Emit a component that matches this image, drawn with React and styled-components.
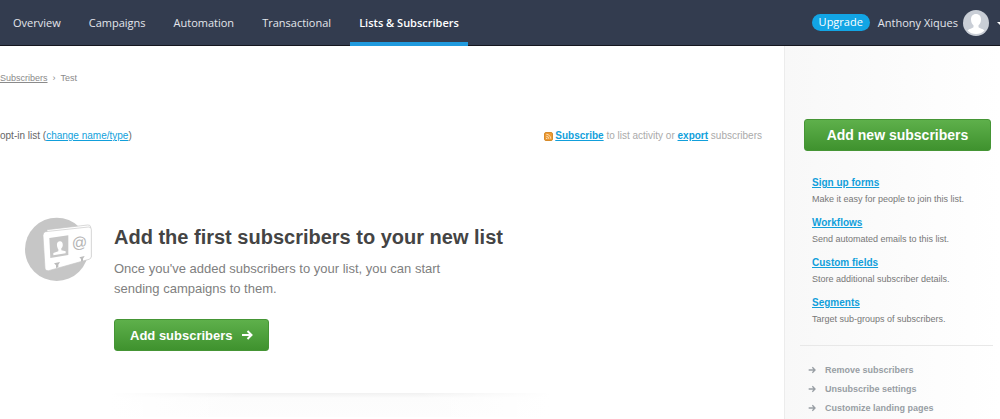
import React from 'react';
import styled, { createGlobalStyle } from 'styled-components';

const GlobalStyle = createGlobalStyle`
  * { box-sizing: border-box; }
  html, body { height: 100%; }
  #root { height: 100%; }
  body {
    margin: 0;
    background: #fff;
    color: #666;
    font-family: "Liberation Sans", Arial, sans-serif;
    overflow: hidden;
  }
`;

const Page = styled.div`
  display: flex;
  flex-direction: column;
  min-height: 100%;
`;

const TopBar = styled.header`
  display: flex;
  justify-content: space-between;
  height: 46px;
  padding-left: 4px;
  background: #333c4f;
  box-shadow: inset 0 -1px 0 #15161f;
  font-family: "Open Sans", sans-serif;
  font-size: 11px;
`;

const Nav = styled.nav`
  display: flex;
  gap: 10px;
`;

const NavLink = styled.a`
  display: flex;
  align-items: center;
  padding: 2px 9px 0;
  border-bottom: 4px solid ${props => (props.$active ? '#1f9ade' : 'transparent')};
  color: ${props => (props.$active ? '#fff' : '#e3e6ec')};
  font-weight: ${props => (props.$active ? 600 : 400)};
  text-decoration: none;
  white-space: nowrap;
`;

const Account = styled.div`
  display: flex;
  align-items: center;
  flex-shrink: 0;
  padding-bottom: 1px;
  overflow: hidden;
`;

const Upgrade = styled.a`
  height: 17px;
  margin-right: 8px;
  padding: 0 7px;
  border-radius: 9px;
  background: #12a5e5;
  color: #fff;
  line-height: 16px;
  text-decoration: none;
`;

const UserButton = styled.button`
  display: flex;
  align-items: center;
  gap: 5px;
  margin-right: -5px;
  padding: 0;
  border: 0;
  background: none;
  color: #e3e6ec;
  font: inherit;
`;

const Caret = styled.span`
  margin: 3px 0 0 3px;
  border: 4px solid transparent;
  border-top-color: #fff;
  border-bottom: 0;
`;

const Columns = styled.div`
  display: flex;
  flex: 1;
`;

const Main = styled.main`
  flex: 1;
  min-width: 0;
  padding: 25px 22px 0 0;
`;

const Breadcrumb = styled.nav`
  display: flex;
  gap: 5px;
  color: #8a8a8a;
  font-size: 9px;
  line-height: 14px;

  a { color: inherit; }
`;

const ListBar = styled.div`
  display: flex;
  justify-content: space-between;
  margin-top: 43px;
  font-size: 10px;
  line-height: 16px;

  a { color: #119fdb; }
`;

const Activity = styled.div`
  display: flex;
  align-items: center;
  gap: 2px;
  color: #aaa;

  a { font-weight: 700; }
`;

const Intro = styled.section`
  display: flex;
  gap: 22px;
  padding: 73px 0 0 25px;
`;

const IntroTitle = styled.h1`
  margin: 8px 0 10px;
  color: #444;
  font-size: 20px;
  line-height: 24px;
`;

const IntroText = styled.p`
  max-width: 340px;
  margin: 0 0 20px;
  color: #808080;
  font-size: 13px;
  line-height: 20px;
`;

const GreenButton = styled.button`
  display: flex;
  align-items: center;
  justify-content: center;
  gap: 8px;
  width: ${props => (props.$wide ? '100%' : 'auto')};
  height: 32px;
  padding: 0 15px;
  border: 1px solid #459535;
  border-radius: 3px;
  background: linear-gradient(#5eb04b, #3f922e);
  color: #fff;
  font-family: inherit;
  font-size: ${props => (props.$wide ? '14px' : '13px')};
  font-weight: 700;
`;

const Shade = styled.div`
  max-width: 440px;
  height: 24px;
  margin: 42px 0 0 110px;
  background:
    linear-gradient(90deg, #fff, transparent 30%, transparent 70%, #fff),
    linear-gradient(#f1f1f1, #fcfcfc 5px, #fdfdfd);
`;

const Sidebar = styled.aside`
  flex: 0 0 216px;
  padding: 73px 9px 0 19px;
  border-left: 1px solid #ececec;
  background: linear-gradient(90deg, #f8f8f8, #fff);
`;

const LinkList = styled.dl`
  margin: 24px 0 0;
  padding: 0 0 18px 8px;
  line-height: 16px;

  dt { font-size: 10px; font-weight: 700; }
  dt a { color: #119fdb; }
  dd { margin: 0 0 8px; color: #777; font-size: 9px; white-space: nowrap; }
  dd:last-child { margin: 0; }
`;

const Actions = styled.ul`
  margin: 0 -2px 0 -4px;
  padding: 14px 0 0 8px;
  border-top: 1px solid #e8e8e8;
  list-style: none;
`;

const ActionLink = styled.a`
  display: flex;
  align-items: center;
  gap: 9px;
  height: 19px;
  color: #989ea4;
  font-size: 9px;
  font-weight: 700;
  text-decoration: none;
`;

const resources = [
  { name: 'Sign up forms', text: 'Make it easy for people to join this list.' },
  { name: 'Workflows', text: 'Send automated emails to this list.' },
  { name: 'Custom fields', text: 'Store additional subscriber details.' },
  { name: 'Segments', text: 'Target sub-groups of subscribers.' },
];

const actions = ['Remove subscribers', 'Unsubscribe settings', 'Customize landing pages'];

const Arrow = ({ size, weight }) => (
  <svg width={size} height={size} viewBox="0 0 12 12" fill="none" stroke="currentColor" strokeWidth={weight} aria-hidden="true">
    <path d="M1 6h9M6.500 2l4 4-4 4" />
  </svg>
);

const Avatar = () => (
  <svg width="26" height="26" viewBox="0 0 26 26" aria-hidden="true">
    <circle cx="13" cy="13" r="13" fill="#c9ced6" />
    <path d="M13 4c-3.300 0-5 2.300-5 5.500 0 2.600 1 4.500 2.500 5.800v2c-1.500 1.200-4 1.400-6 3.200a12 12 0 0 0 17 0c-2-1.800-4.500-2-6-3.200v-2C17 14 18 12.100 18 9.500 18 6.300 16.300 4 13 4z" fill="#fff" />
  </svg>
);

const RssIcon = () => (
  <svg width="9" height="9" viewBox="0 0 9 9" fill="none" aria-hidden="true">
    <rect x=".5" y=".5" width="8" height="8" rx="1.500" fill="#ee9a33" stroke="#d68b2c" />
    <path d="M2.300 4.300a2.500 2.500 0 0 1 2.500 2.500M2.300 2.300a4.500 4.500 0 0 1 4.500 4.500" stroke="#fbe3c0" strokeWidth=".9" />
    <circle cx="2.700" cy="6.400" r=".7" fill="#fbe3c0" />
  </svg>
);

// contact card in front of a grey disc
const ContactCard = () => (
  <svg width="67" height="65" viewBox="74 52 201 195" aria-hidden="true">
    <circle cx="169" cy="149" r="95" fill="#c6c6c6" />
    <path d="M140 90l122-14q8-1 9 6l1 90-132 30z" fill="#fff" stroke="#c6c6c6" strokeWidth="2" />
    <path d="M136 96l128-14q9-1 9 8v80q0 7-7 9l-121 34q-10 2-11-7l-6-98q0-11 8-12z" fill="#fff" stroke="#c6c6c6" strokeWidth="2" />
    <path d="M161 191l18-4-5 8v8l-7 2v-8zM237 173l16-4-5 8v7l-6 2v-8z" fill="#bcbcbc" />
    <path d="M147 115l57-8v59l-54 9z" fill="#c6c6c6" />
    <path d="M178 125c-7 1-9 6-8 13 1 5 2 8 4 11v6l-15 5v7l37-6v-6l-13-3v-6c4-4 5-8 4-14-1-5-4-8-9-7z" fill="#fff" />
    <text x="214" y="144" fontSize="46" fill="#b4b4b4" transform="rotate(-6 238 130)">@</text>
  </svg>
);

export default function App() {
  return (
    <Page>
      <GlobalStyle />
      <TopBar>
        <Nav>
          <NavLink href="#">Overview</NavLink>
          <NavLink href="#">Campaigns</NavLink>
          <NavLink href="#">Automation</NavLink>
          <NavLink href="#">Transactional</NavLink>
          <NavLink href="#" $active>Lists &amp; Subscribers</NavLink>
        </Nav>
        <Account>
          <Upgrade href="#">Upgrade</Upgrade>
          <UserButton type="button">
            Anthony Xiques
            <Avatar />
            <Caret />
          </UserButton>
        </Account>
      </TopBar>
      <Columns>
        <Main>
          <Breadcrumb>
            <a href="#">Subscribers</a>
            <span>›</span>
            <span>Test</span>
          </Breadcrumb>
          <ListBar>
            <div>opt-in list (<a href="#">change name/type</a>)</div>
            <Activity>
              <RssIcon />
              <span><a href="#">Subscribe</a> to list activity or <a href="#">export</a> subscribers</span>
            </Activity>
          </ListBar>
          <Intro>
            <ContactCard />
            <div>
              <IntroTitle>Add the first subscribers to your new list</IntroTitle>
              <IntroText>Once you've added subscribers to your list, you can start sending campaigns to them.</IntroText>
              <GreenButton type="button">
                Add subscribers
                <Arrow size={12} weight={2} />
              </GreenButton>
            </div>
          </Intro>
          <Shade />
        </Main>
        <Sidebar>
          <GreenButton type="button" $wide>Add new subscribers</GreenButton>
          <LinkList>
            {resources.map(item => (
              <React.Fragment key={item.name}>
                <dt><a href="#">{item.name}</a></dt>
                <dd>{item.text}</dd>
              </React.Fragment>
            ))}
          </LinkList>
          <Actions>
            {actions.map(name => (
              <li key={name}>
                <ActionLink href="#"><Arrow size={8} weight={2} />{name}</ActionLink>
              </li>
            ))}
          </Actions>
        </Sidebar>
      </Columns>
    </Page>
  );
}
